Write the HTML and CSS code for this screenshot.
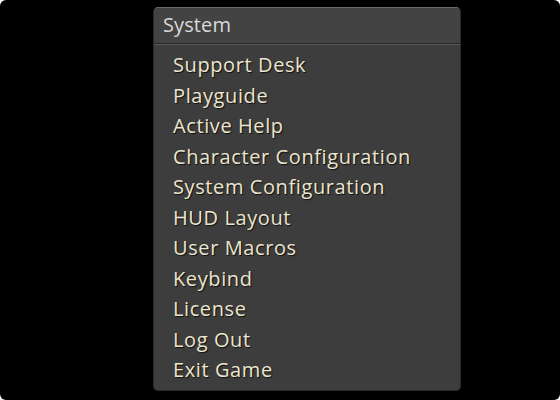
FILE: index.html
```html
<!DOCTYPE html>
<html>
<head>
<meta charset="utf-8">
<link rel="stylesheet" href="styles.css">
</head>
<body>
<div class="screen">
  <div class="menu">
    <div class="menu-title">System</div>
    <ul class="menu-list">
      <li>Support Desk</li>
      <li>Playguide</li>
      <li>Active Help</li>
      <li>Character Configuration</li>
      <li>System Configuration</li>
      <li>HUD Layout</li>
      <li>User Macros</li>
      <li>Keybind</li>
      <li>License</li>
      <li>Log Out</li>
      <li>Exit Game</li>
    </ul>
  </div>
</div>
</body>
</html>
```
FILE: styles.css
```css
html, body {
  margin: 0;
  padding: 0;
  background: #ffffff;
}
.screen {
  width: 560px;
  height: 400px;
  background: #000000;
  border-radius: 6px;
  box-sizing: border-box;
  padding-top: 7px;
  padding-left: 153px;
  overflow: hidden;
}
.menu {
  width: 308px;
  height: 384px;
  box-sizing: border-box;
  background: #3d3d3d;
  border: 1px solid #2a2a2a;
  border-top-color: #6a6a6a;
  border-radius: 5px;
  font-family: "Open Sans", "Noto Sans", sans-serif;
}
.menu-title {
  height: 36px;
  box-sizing: border-box;
  padding: 3px 0 0 9px;
  color: #d9d9d9;
  font-size: 20px;
  letter-spacing: 0.1px;
  line-height: 28px;
  background: #434343;
  border-bottom: 1px solid #262626;
  box-shadow: 0 1px 0 #5a5a5a;
  border-radius: 4px 4px 0 0;
}
.menu-list {
  list-style: none;
  margin: 0;
  padding: 6px 0 0 19px;
}
.menu-list li {
  color: #ece6cf;
  font-size: 20px;
  letter-spacing: 0.6px;
  line-height: 30.5px;
  height: 30.5px;
  text-shadow: 1px 1px 1px #111;
}
```
